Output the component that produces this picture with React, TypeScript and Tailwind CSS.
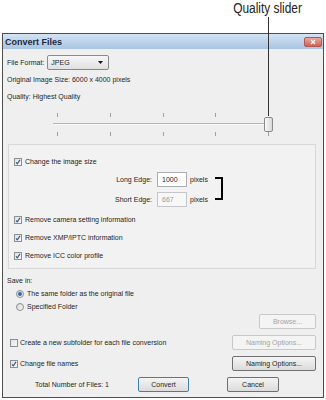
import type { ReactNode } from "react";

function CheckBox({ checked }: { checked?: boolean }) {
  return (
    <span className="flex h-[8px] w-[8px] shrink-0 items-center justify-center border border-[#8e8f8f] bg-linear-to-br from-[#d9e3ee] to-[#f7f9fb]">
      {checked && (
        <svg width="6" height="6" viewBox="0 0 6 6">
          <path d="M1 3.3 L2.3 4.8 L5 0.9" stroke="#3a5278" strokeWidth="1.1" fill="none" />
        </svg>
      )}
    </span>
  );
}

function Radio({ checked }: { checked?: boolean }) {
  return (
    <span className="flex h-[8px] w-[8px] shrink-0 items-center justify-center rounded-full border border-[#8e8f8f] bg-linear-to-br from-[#d6d6d6] to-[#f8f8f8]">
      {checked && <span className="h-[4px] w-[4px] rounded-full bg-[#2a6db0]" />}
    </span>
  );
}

function Button({
  children,
  disabled,
  primary,
  className = "",
}: {
  children: ReactNode;
  disabled?: boolean;
  primary?: boolean;
  className?: string;
}) {
  const look = disabled
    ? "border-[#c8c8c8] bg-[#f4f4f4] text-[#a3a3a3]"
    : primary
      ? "border-[#3c7fb1] bg-linear-to-b from-[#f4f4f4] to-[#dcdcdc] text-[#1e1e1e]"
      : "border-[#707070] bg-linear-to-b from-[#f4f4f4] to-[#dcdcdc] text-[#1e1e1e]";
  return (
    <div className={`flex h-[15px] items-center justify-center rounded-[2px] border ${look} ${className}`}>
      {children}
    </div>
  );
}

function CheckRow({ label, checked = true }: { label: string; checked?: boolean }) {
  return (
    <div className="flex h-[15px] items-center gap-[3px]">
      <CheckBox checked={checked} />
      <span>{label}</span>
    </div>
  );
}

export default function App() {
  const ticks = [57, 110, 163, 215];

  return (
    <div className="relative h-[400px] w-[326px] overflow-hidden bg-white font-['Liberation_Sans',Tahoma,sans-serif] text-[7px] leading-none text-[#1e1e1e]">
      {/* callout */}
      <div className="flex h-[33px] justify-end pr-[24px]">
        <span className="origin-right scale-x-[0.85] font-['Liberation_Sans',sans-serif] text-[14px] leading-[16px] text-[#222]">
          Quality slider
        </span>
      </div>
      <div className="pointer-events-none absolute left-[268px] top-[17px] h-[99px] w-px bg-[#333]" />

      {/* dialog */}
      <div className="mx-[2px] flex h-[365px] flex-col border border-[#4e4e4e] bg-[#efefef]">
        <div className="flex h-[15px] items-start justify-between bg-linear-to-b from-[#d3e3f3] to-[#a9c5e2] pl-[2px] pr-[1px]">
          <span className="mt-[4px] text-[9px] font-bold text-[#1b2b3d]">Convert Files</span>
          <span className="mt-[3px] flex h-[10px] w-[18px] items-center justify-center rounded-[2px] border border-[#b0584f] bg-linear-to-b from-[#eaa79b] to-[#d4604f]">
            <svg width="6" height="6" viewBox="0 0 6 6">
              <path d="M1 1 L5 5 M5 1 L1 5" stroke="#fff" strokeWidth="1.4" />
            </svg>
          </span>
        </div>

        <div className="flex flex-col pl-[4px]">
          <div className="mt-[6px] flex h-[15px] items-center gap-[3px]">
            <span>File Format:</span>
            <div className="flex h-[15px] w-[62px] items-center justify-between rounded-[2px] border border-[#8a8a8a] bg-linear-to-b from-[#f7f7f7] to-[#e0e0e0] pl-[3px] pr-[5px]">
              <span>JPEG</span>
              <svg width="5" height="3" viewBox="0 0 5 3">
                <path d="M0 0 H5 L2.5 3 Z" fill="#111" />
              </svg>
            </div>
          </div>
          <div className="mt-[2px] flex h-[15px] items-center">Original Image Size: 6000 x 4000 pixels</div>
          <div className="mt-[2px] flex h-[15px] items-center">Quality: Highest Quality</div>
        </div>

        {/* slider */}
        <svg width="320" height="36" viewBox="3 104 320 36" className="mt-[1px] shrink-0">
          {ticks.map((x) => (
            <line key={`t${x}`} x1={x + 0.5} y1={112} x2={x + 0.5} y2={116} stroke="#a0a0a0" />
          ))}
          {[...ticks, 268].map((x) => (
            <line key={`b${x}`} x1={x + 0.5} y1={131} x2={x + 0.5} y2={135} stroke="#a0a0a0" />
          ))}
          <line x1={53} y1={122.5} x2={270} y2={122.5} stroke="#b4b4b4" />
          <line x1={53} y1={123.5} x2={270} y2={123.5} stroke="#f8f8f8" />
          <defs>
            <linearGradient id="thumb" x1="0" y1="0" x2="1" y2="0">
              <stop offset="0" stopColor="#fbfbfb" />
              <stop offset="1" stopColor="#d6d6d6" />
            </linearGradient>
          </defs>
          <rect x={264.5} y={116.5} width={8} height={14} rx={1.5} fill="url(#thumb)" stroke="#8a8a8a" />
        </svg>

        {/* image size group */}
        <div className="ml-[5px] mr-[7px] mt-[3px] flex h-[125px] flex-col border border-[#d8d8d8] bg-[#f2f2f2] pl-[5px] pt-[9px]">
          <CheckRow label="Change the image size" />
          <div className="mt-[3px] flex h-[15px] items-center">
            <span className="w-[138px] text-right">Long Edge:</span>
            <div className="ml-[5px] flex h-[15px] w-[30px] items-center border border-[#abadb3] bg-white pl-[4px]">1000</div>
            <span className="ml-[3px]">pixels</span>
          </div>
          <div className="mt-[5px] flex h-[15px] items-center">
            <span className="w-[138px] text-right">Short Edge:</span>
            <div className="ml-[5px] flex h-[15px] w-[30px] items-center border border-[#c4c6cb] bg-[#f7f7f7] pl-[4px] text-[#9a9a9a]">
              667
            </div>
            <span className="ml-[3px]">pixels</span>
          </div>
          <div className="mt-[5px]">
            <CheckRow label="Remove camera setting information" />
          </div>
          <div className="mt-[3px]">
            <CheckRow label="Remove XMP/IPTC information" />
          </div>
          <div className="mt-[3px]">
            <CheckRow label="Remove ICC color profile" />
          </div>
        </div>
        {/* bracket callout */}
        <div className="pointer-events-none absolute left-[215px] top-[177px] h-[23px] w-[8px] border-y-2 border-r-2 border-black" />

        {/* save location */}
        <div className="mt-[5px] flex h-[13px] items-center pl-[4px]">Save in:</div>
        <div className="flex h-[13px] items-center gap-[3px] pl-[13px]">
          <Radio checked />
          <span>The same folder as the original file</span>
        </div>
        <div className="flex h-[13px] items-center gap-[3px] pl-[13px]">
          <Radio />
          <span>Specified Folder</span>
        </div>
        <div className="mt-[1px] flex justify-end pr-[7px]">
          <Button disabled className="w-[57px]">
            Browse...
          </Button>
        </div>

        <div className="mt-[6px] flex items-center pl-[7px] pr-[7px]">
          <CheckBox />
          <span className="ml-[2px]">Create a new subfolder for each file conversion</span>
          <Button disabled className="ml-auto w-[84px]">
            Naming Options...
          </Button>
        </div>
        <div className="mt-[6px] flex items-center pl-[7px] pr-[7px]">
          <CheckBox checked />
          <span className="ml-[2px]">Change file names</span>
          <Button className="ml-auto w-[84px]">Naming Options...</Button>
        </div>

        <div className="mt-[6px] flex items-center pl-[32px]">
          <span className="w-[103px]">Total Number of Files: 1</span>
          <Button primary className="w-[51px]">
            Convert
          </Button>
          <Button className="ml-[38px] w-[52px]">Cancel</Button>
        </div>
      </div>
    </div>
  );
}
